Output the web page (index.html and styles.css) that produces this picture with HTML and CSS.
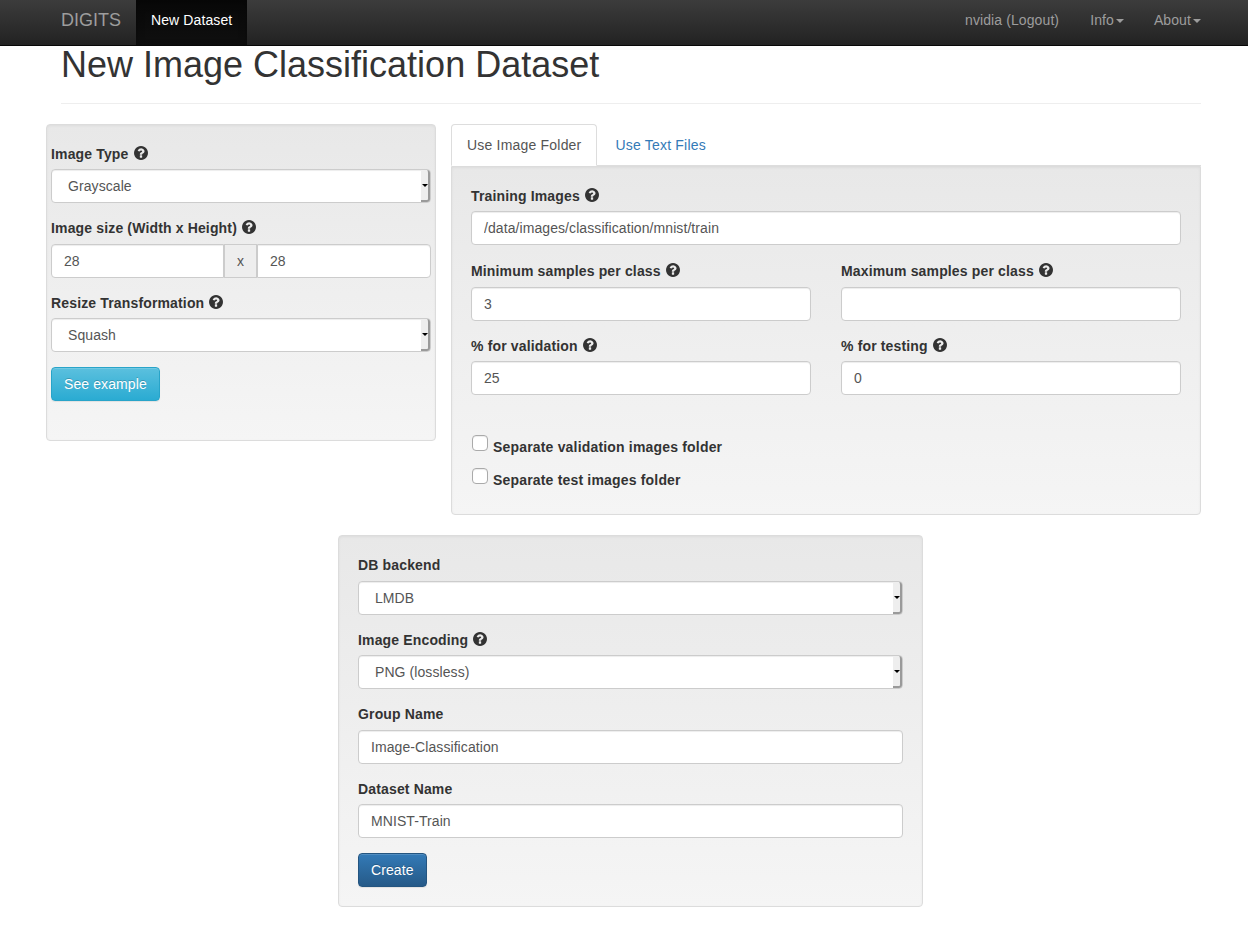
FILE: index.html
```html
<!DOCTYPE html>
<html lang="en">
<head>
    <meta charset="UTF-8">
    <meta name="viewport" content="width=device-width, initial-scale=1.0">
    <title>New Image Classification Dataset - DIGITS</title>
    <link rel="stylesheet" href="styles.css">
</head>
<body>
    <svg class="icon-defs" width="0" height="0">
        <symbol id="help" viewBox="0 128 1536 1536">
            <path d="M896 1376v-192q0-14-9-23t-23-9h-192q-14 0-23 9t-9 23v192q0 14 9 23t23 9h192q14 0 23-9t9-23zm256-672q0-88-55.5-163t-138.5-116-170-41q-243 0-371 213-15 24 8 42l132 100q7 6 19 6 16 0 25-12 53-68 86-92 34-24 86-24 48 0 85.5 26t37.5 59q0 38-20 61t-68 45q-63 28-115.5 86.5t-52.5 125.5v36q0 14 9 23t23 9h192q14 0 23-9t9-23q0-19 21.5-49.5t54.5-49.5q32-18 49-28.5t46-35 44.5-48 28-60.5 12.5-81zm384 192q0 209-103 385.5t-279.5 279.5-385.5 103-385.5-103-279.5-279.5-103-385.5 103-385.5 279.5-279.5 385.5-103 385.5 103 279.5 279.5 103 385.5z"/>
        </symbol>
    </svg>

    <!-- Top navbar -->
    <nav class="navbar">
        <div class="nav-inner">
            <a href="#" class="brand">DIGITS</a>
            <a href="#" class="nav-link active">New Dataset</a>
            <div class="nav-right">
                <a href="#" class="nav-link">nvidia (Logout)</a>
                <a href="#" class="nav-link">Info<span class="caret"></span></a>
                <a href="#" class="nav-link">About<span class="caret"></span></a>
            </div>
        </div>
    </nav>

    <div class="container">
        <div class="page-header">
            <h1>New Image Classification Dataset</h1>
        </div>

        <div class="top-row">
            <div class="well side-well">
                <div class="form-group">
                    <label>Image Type <svg class="help"><use href="#help"></use></svg></label>
                    <div class="select-wrap">
                        <select class="form-control">
                            <option>Grayscale</option>
                            <option>Color</option>
                        </select>
                        <span class="select-btn"></span>
                    </div>
                </div>
                <div class="form-group">
                    <label>Image size (Width x Height) <svg class="help"><use href="#help"></use></svg></label>
                    <div class="input-group">
                        <input class="form-control" type="text" value="28">
                        <span class="input-addon">x</span>
                        <input class="form-control" type="text" value="28">
                    </div>
                </div>
                <div class="form-group">
                    <label>Resize Transformation <svg class="help"><use href="#help"></use></svg></label>
                    <div class="select-wrap">
                        <select class="form-control">
                            <option>Squash</option>
                            <option>Crop</option>
                        </select>
                        <span class="select-btn"></span>
                    </div>
                </div>
                <button type="button" class="btn btn-info">See example</button>
            </div>

            <div class="main-col">
                <div class="nav-tabs">
                    <a href="#" class="tab active">Use Image Folder</a>
                    <a href="#" class="tab">Use Text Files</a>
                </div>
                <div class="well tab-well">
                    <div class="form-group">
                        <label>Training Images <svg class="help"><use href="#help"></use></svg></label>
                        <input class="form-control" type="text" value="/data/images/classification/mnist/train">
                    </div>
                    <div class="form-grid">
                        <div class="form-group">
                            <label>Minimum samples per class <svg class="help"><use href="#help"></use></svg></label>
                            <input class="form-control" type="text" value="3">
                        </div>
                        <div class="form-group">
                            <label>Maximum samples per class <svg class="help"><use href="#help"></use></svg></label>
                            <input class="form-control" type="text">
                        </div>
                        <div class="form-group">
                            <label>% for validation <svg class="help"><use href="#help"></use></svg></label>
                            <input class="form-control" type="text" value="25">
                        </div>
                        <div class="form-group">
                            <label>% for testing <svg class="help"><use href="#help"></use></svg></label>
                            <input class="form-control" type="text" value="0">
                        </div>
                    </div>
                    <label class="check"><input type="checkbox"> Separate validation images folder</label>
                    <label class="check"><input type="checkbox"> Separate test images folder</label>
                </div>
            </div>
        </div>

        <div class="well bottom-well">
            <div class="form-group">
                <label>DB backend</label>
                <div class="select-wrap">
                    <select class="form-control">
                        <option>LMDB</option>
                        <option>HDF5</option>
                    </select>
                    <span class="select-btn"></span>
                </div>
            </div>
            <div class="form-group">
                <label>Image Encoding <svg class="help"><use href="#help"></use></svg></label>
                <div class="select-wrap">
                    <select class="form-control">
                        <option>PNG (lossless)</option>
                        <option>JPEG (lossy)</option>
                    </select>
                    <span class="select-btn"></span>
                </div>
            </div>
            <div class="form-group">
                <label>Group Name</label>
                <input class="form-control" type="text" value="Image-Classification">
            </div>
            <div class="form-group">
                <label>Dataset Name</label>
                <input class="form-control" type="text" value="MNIST-Train">
            </div>
            <button type="button" class="btn btn-primary">Create</button>
        </div>
    </div>
</body>
</html>
```

FILE: styles.css
```css
* { box-sizing: border-box; }
body { margin: 0; font-family: "Liberation Sans", Arial, sans-serif; font-size: 14px; line-height: 20px; letter-spacing: 0.1px; color: #333; background: #fff; }
a { text-decoration: none; }
.icon-defs { position: absolute; }

/* navbar */
.navbar { height: 46px; background: linear-gradient(to bottom, #3c3c3c 0, #222 100%); border-bottom: 1px solid #080808; }
.nav-inner { display: flex; width: 1170px; margin-left: 46px; padding-left: 15px; height: 45px; }
.brand { color: #9d9d9d; font-size: 18px; line-height: 20px; letter-spacing: 0; padding: 10px 15px 15px 0; }
.nav-link { color: #9d9d9d; padding: 10px 15px 15px; display: block; }
.nav-link.active { color: #fff; background: linear-gradient(to bottom, #080808 0, #0f0f0f 100%); box-shadow: inset 0 3px 9px rgba(0, 0, 0, 0.25); }
.nav-right { display: flex; margin-left: auto; }
.nav-right .nav-link:first-child { padding-right: 16px; }
.caret { display: inline-block; margin-left: 2px; vertical-align: middle; border-top: 4px solid; border-left: 4px solid transparent; border-right: 4px solid transparent; }

.container { width: 1170px; margin-left: 46px; }
.page-header { margin: 0 15px 20px; padding-bottom: 9px; border-bottom: 1px solid #eee; height: 58px; }
h1 { margin: 0; font-size: 36px; font-weight: 500; line-height: 37.6px; letter-spacing: 0; }

/* wells */
.top-row { display: flex; align-items: flex-start; gap: 15px; }
.well { padding: 19px; border: 1px solid #dcdcdc; border-radius: 4px; background: linear-gradient(to bottom, #e8e8e8 0, #f5f5f5 100%); box-shadow: inset 0 1px 3px rgba(0, 0, 0, 0.05), 0 1px 0 rgba(255, 255, 255, 0.1); }
.side-well { width: 390px; height: 317px; padding: 19px 4px; }
.main-col { width: 750px; }
.tab-well { height: 349px; border-top-left-radius: 0; border-top-right-radius: 0; }
.bottom-well { width: 585px; margin: 20px 0 0 292px; height: 372px; padding-top: 19.4px; }
.bottom-well label { margin-bottom: 5.2px; }
.bottom-well .form-group { margin-bottom: 14.8px; }

/* tabs */
.nav-tabs { display: flex; border-bottom: 1px solid #ddd; height: 42px; }
.tab { height: 42px; padding: 10px 15px; margin-right: 2px; border: 1px solid transparent; border-radius: 4px 4px 0 0; color: #337ab7; letter-spacing: 0.2px; }
.tab.active { color: #555; background: #fff; border-color: #ddd #ddd transparent; position: relative; z-index: 1; }

/* forms */
.form-group { margin-bottom: 15px; }
label { display: block; height: 20.4px; margin-bottom: 5px; font-weight: bold; letter-spacing: 0.15px; }
.help { width: 14px; height: 14px; vertical-align: -1px; margin-left: 1px; fill: #333; }
.form-control { display: block; width: 100%; height: 34px; padding: 6px 12px; font: 14px/20px "Liberation Sans", Arial, sans-serif; letter-spacing: 0.08px; color: #555; background: #fff; border: 1px solid #ccc; border-radius: 4px; box-shadow: inset 0 1px 1px rgba(0, 0, 0, 0.075); outline: none; }
.select-wrap { position: relative; }
select.form-control { appearance: none; padding-left: 16px; }
.select-btn { position: absolute; top: 1px; right: 1px; bottom: 1px; width: 9px; background: #eee; border-right: 2px solid #9a9a9a; border-bottom: 2px solid #9a9a9a; border-radius: 0 3px 3px 0; pointer-events: none; }
.select-btn::after { content: ""; position: absolute; top: 14px; left: 1px; border-top: 3px solid #000; border-left: 3px solid transparent; border-right: 3px solid transparent; }
.input-group { display: flex; }
.input-group .form-control { min-width: 0; }
.input-group .form-control:first-child { flex: 0 0 173px; border-radius: 4px 0 0 4px; }
.input-group .form-control:last-child { flex: 1; border-radius: 0 4px 4px 0; }
.input-addon { width: 33px; height: 34px; padding: 6px 0; text-align: center; color: #555; background: #eee; border: 1px solid #ccc; }
.form-grid { display: grid; grid-template-columns: 340px 340px; column-gap: 30px; padding-top: 1px; }
.check { display: flex; align-items: center; height: 23px; margin-bottom: 10px; letter-spacing: 0.18px; }
.check input { appearance: none; width: 16px; height: 16px; margin: -8px 5px 0 1px; background: #fff; border: 1px solid #aaa; border-radius: 4px; box-shadow: inset 0 1px 1px rgba(0, 0, 0, 0.075); }
.tab-well .check:first-of-type { margin-top: 25px; }

/* buttons */
.btn { display: block; height: 34px; padding: 6px 12px; font: 14px/20px "Liberation Sans", Arial, sans-serif; letter-spacing: 0.1px; color: #fff; border: 1px solid transparent; border-radius: 4px; text-shadow: 0 -1px 0 rgba(0, 0, 0, 0.2); box-shadow: inset 0 1px 0 rgba(255, 255, 255, 0.15), 0 1px 1px rgba(0, 0, 0, 0.075); }
.btn-info { background: linear-gradient(to bottom, #5bc0de 0, #2aabd2 100%); border-color: #28a4c9; }
.btn-primary { background: linear-gradient(to bottom, #337ab7 0, #265a88 100%); border-color: #245580; }
```
